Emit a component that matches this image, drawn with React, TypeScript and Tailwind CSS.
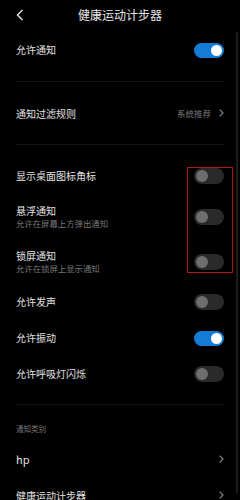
import React from "react";

const font = { fontFamily: '"Noto Sans CJK SC", "Noto Sans", sans-serif' };

function Toggle({ on }: { on?: boolean }) {
  return on ? (
    <div className="w-[30px] h-[15px] rounded-full bg-[#157cd6] flex items-center justify-end pr-[2px] shrink-0">
      <div className="w-[11px] h-[11px] rounded-full bg-white" />
    </div>
  ) : (
    <div className="w-[30px] h-[16px] rounded-full bg-[#2a2a2a] flex items-center justify-start pl-[2px] shrink-0">
      <div className="w-[12px] h-[12px] rounded-full bg-[#6e6e6e]" />
    </div>
  );
}

function Chevron() {
  return (
    <svg width="5" height="8" viewBox="0 0 5 8" className="shrink-0">
      <polyline points="0.7,0.7 4,4 0.7,7.3" fill="none" stroke="#8a8a8a" strokeWidth="1.1" />
    </svg>
  );
}

function Row({ title, sub, h, right }: { title: string; sub?: string; h: string; right: React.ReactNode }) {
  return (
    <div className={`flex items-center justify-between px-4 ${h}`}>
      <div className="flex flex-col gap-[1px]">
        <span className="text-[10px] leading-[12px] text-[#e2e2e2]">{title}</span>
        {sub && <span className="text-[8.4px] leading-[10px] text-[#777777]">{sub}</span>}
      </div>
      {right}
    </div>
  );
}

export default function App() {
  return (
    <div className="w-[240px] h-[500px] bg-black overflow-hidden relative" style={font}>
      <div className="h-[30px] flex items-center relative">
        <svg width="8" height="12" viewBox="0 0 8 12" className="absolute left-[16px] top-[9px]">
          <polyline points="6.5,1 1.5,6 6.5,11" fill="none" stroke="#e6e6e6" strokeWidth="1.4" />
        </svg>
        <div className="w-full text-center text-[12px] leading-[16px] text-[#e6e6e6]">健康运动计步器</div>
      </div>
      <Row title="允许通知" h="h-[40px]" right={<Toggle on />} />
      <div className="h-[11px]" />
      <div className="mx-4 h-px bg-[#161616]" />
      <div className="flex items-center justify-between px-4 h-[62px]">
        <span className="text-[10px] leading-[13px] text-[#e2e2e2]">通知过滤规则</span>
        <div className="flex items-center gap-[8px]">
          <span className="text-[8.5px] leading-[11px] text-[#7a7a7a]">系统推荐</span>
          <Chevron />
        </div>
      </div>
      <div className="mx-4 h-px bg-[#161616]" />
      <div className="h-[13px]" />
      <Row title="显示桌面图标角标" h="h-[36px]" right={<Toggle />} />
      <Row title="悬浮通知" sub="允许在屏幕上方弹出通知" h="h-[45px]" right={<Toggle />} />
      <Row title="锁屏通知" sub="允许在锁屏上显示通知" h="h-[45px]" right={<Toggle />} />
      <Row title="允许发声" h="h-[36px]" right={<Toggle />} />
      <Row title="允许振动" h="h-[36px]" right={<Toggle on />} />
      <Row title="允许呼吸灯闪烁" h="h-[36px]" right={<Toggle />} />
      <div className="h-[12px]" />
      <div className="mx-4 h-px bg-[#161616]" />
      <div className="px-4 pt-[19px] text-[7.5px] leading-[10px] text-[#7a7a7a]">通知类别</div>
      <div className="h-[7px]" />
      <div className="flex items-center justify-between px-4 h-[36px]">
        <span className="text-[11px] leading-[13px] text-[#e2e2e2]">hp</span>
        <Chevron />
      </div>
      <div className="flex items-center justify-between px-4 h-[36px]">
        <span className="text-[10px] leading-[13px] text-[#e2e2e2]">健康运动计步器</span>
        <Chevron />
      </div>
      <div className="absolute left-[236px] top-[32px] w-[2px] h-[461px] bg-[#1c1c1c]" />
      <div className="absolute left-[187px] top-[167px] w-[46px] h-[106px] border border-[#b5121b]" />
    </div>
  );
}
